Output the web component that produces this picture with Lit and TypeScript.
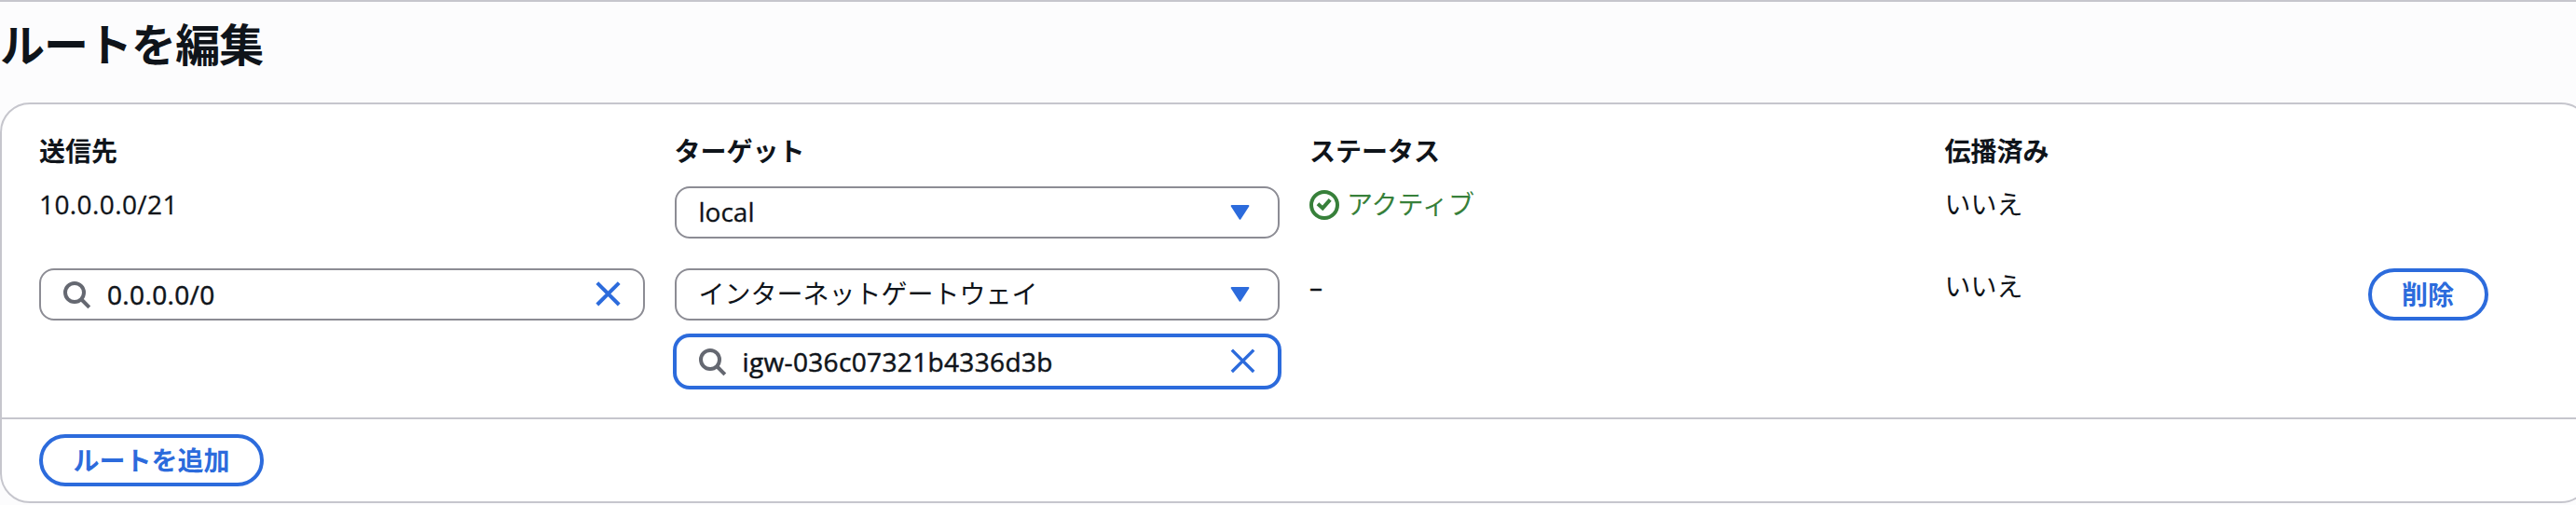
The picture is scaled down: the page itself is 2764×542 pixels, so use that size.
import { LitElement, html, css, svg } from "lit";
import { customElement, property } from "lit/decorators.js";

const searchIcon = svg`<svg class="icon search" viewBox="0 0 32 32" fill="none"><circle cx="14" cy="14" r="10"/><path d="M21 21 29.8 29.8"/></svg>`;
const closeIcon = svg`<svg class="icon close" viewBox="0 0 32 32" fill="none"><path d="M4.8 3.6 28.2 27M28.2 3.6 4.8 27"/></svg>`;
const caretIcon = svg`<svg class="icon caret" viewBox="0 0 32 32"><path d="M6.6 9H24.4L15.5 22.6Z"/></svg>`;

const base = css`
  * { box-sizing: border-box; }
  .icon { display: block; width: 32px; height: 32px; flex: none; }
`;

@customElement("route-select")
export class RouteSelect extends LitElement {
  @property() value = "";
  static styles = [base, css`
    :host { display: block; }
    .field { display: flex; align-items: center; justify-content: space-between; height: 56px; padding: 0 24px; border: 2px solid #8c8c94; border-radius: 16px; background: #fff; }
    .value { padding-bottom: 2px; }
    .latin { -webkit-text-stroke: 0.3px currentColor; }
    .caret { fill: #2c6bdc; stroke: #2c6bdc; stroke-width: 2; stroke-linejoin: round; }
  `];
  render() {
    const latin = /^[\x20-\x7e]+$/.test(this.value);
    return html`<div class="field"><span class=${latin ? "value latin" : "value"}>${this.value}</span>${caretIcon}</div>`;
  }
}

@customElement("route-search")
export class RouteSearch extends LitElement {
  @property() value = "";
  @property({ type: Boolean, reflect: true }) focused = false;
  static styles = [base, css`
    :host { display: block; }
    .field { display: flex; align-items: center; gap: 17px; height: 56px; padding: 0 22px; border: 2px solid #8c8c94; border-radius: 16px; background: #fff; }
    :host([focused]) .field { border-color: #2c6bdc; box-shadow: 0 0 0 2px #2c6bdc; }
    .text { flex: 1; letter-spacing: 0.35px; -webkit-text-stroke: 0.5px currentColor; }
    .search { stroke: #656871; stroke-width: 4; }
    .close { stroke: #2c6bdc; stroke-width: 4; }
    :host([focused]) .close { stroke-width: 3.4; }
  `];
  render() {
    return html`<div class="field">${searchIcon}<span class="text">${this.value}</span>${closeIcon}</div>`;
  }
}

@customElement("app-root")
export class AppRoot extends LitElement {
  static styles = [base, css`
    :host { display: block; width: 100%; height: 542px; overflow: hidden; background: #fcfcfd; border-top: 2px solid #c6c6cd; box-sizing: border-box; color: #0f141a; font: 28px/40px "Open Sans", "Noto Sans CJK JP", sans-serif; }
    .title { margin: 0; height: 108px; padding-top: 16px; font-size: 48px; line-height: 60px; font-weight: 700; letter-spacing: -0.96px; }
    .card { width: 2780px; height: 430px; border: 2px solid #c6c6cd; border-radius: 32px; background: #fff; }
    .routes { height: 336px; padding: 30px 40px 0; display: grid; grid-template-columns: repeat(4, 649.5px); column-gap: 32px; grid-template-rows: 58px 88px 1fr; }
    .head { font-weight: 700; }
    .plain { line-height: 38px; }
    .latin { letter-spacing: 0.4px; -webkit-text-stroke: 0.3px currentColor; }
    .stack { display: flex; flex-direction: column; gap: 16px; }
    .status { display: flex; align-items: flex-start; gap: 8px; padding-top: 4px; height: 40px; line-height: 30px; color: #37803a; }
    .ok { stroke: #37803a; stroke-width: 4; }
    .last { display: flex; align-items: flex-start; justify-content: space-between; padding-right: 66.5px; }
    .button { height: 56px; padding: 0 32.4px; border: 4px solid #2c6bdc; border-radius: 28px; background: #fff; color: #2c6bdc; font: inherit; font-weight: 700; line-height: 44px; }
    .footer { height: 90px; padding: 16px 40px; border-top: 2px solid #c6c6cd; }
  `];
  render() {
    return html`
      <h1 class="title">ルートを編集</h1>
      <section class="card">
        <div class="routes">
          <div class="head">送信先</div>
          <div class="head">ターゲット</div>
          <div class="head">ステータス</div>
          <div class="head">伝播済み</div>

          <div class="plain latin">10.0.0.0/21</div>
          <route-select value="local"></route-select>
          <div class="status"><svg class="icon ok" viewBox="0 0 32 32" fill="none"><circle cx="16" cy="16" r="14"/><path d="M9 14.8 14.2 19.4 22.2 10.4"/></svg>アクティブ</div>
          <div class="plain">いいえ</div>

          <route-search value="0.0.0.0/0"></route-search>
          <div class="stack">
            <route-select value="インターネットゲートウェイ"></route-select>
            <route-search value="igw-036c07321b4336d3b" focused></route-search>
          </div>
          <div class="plain latin">–</div>
          <div class="last"><span class="plain">いいえ</span><button class="button">削除</button></div>
        </div>
        <div class="footer"><button class="button">ルートを追加</button></div>
      </section>
    `;
  }
}
